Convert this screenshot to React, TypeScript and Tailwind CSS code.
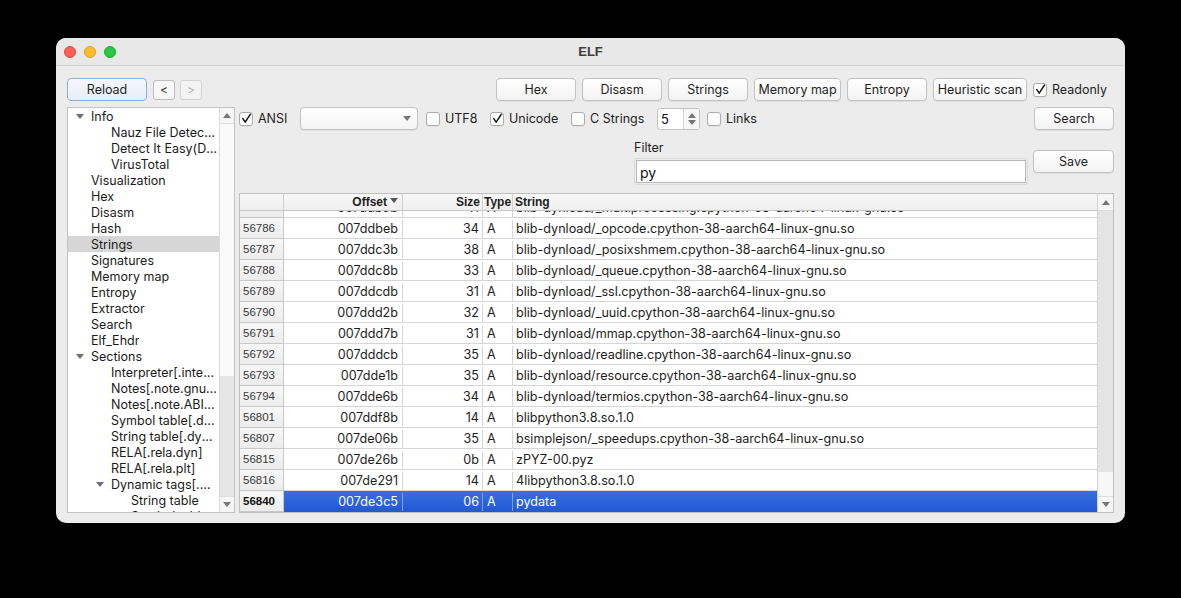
import React from "react";

const FONT = "font-['Inter','Liberation_Sans',Arial,sans-serif]";
const ARIAL = "font-['Liberation_Sans',Arial,sans-serif]";

function Btn({ label, w, h = "h-[23px]", cls = "" }: { label: string; w: string; h?: string; cls?: string }) {
  return (
    <div
      className={`${w} ${h} flex items-center justify-center pt-[2px] rounded-[4px] border border-[#c2c2c2] bg-gradient-to-b from-[#ffffff] to-[#f3f3f3] text-[12.5px] text-[#1f1f1f] shadow-[0_1px_0_rgba(0,0,0,0.06)] ${cls}`}
    >
      {label}
    </div>
  );
}

function Check({ checked }: { checked?: boolean }) {
  return (
    <div className="w-[14px] h-[14px] shrink-0 rounded-[3px] border border-[#ababab] bg-white flex items-center justify-center shadow-[0_1px_0_rgba(0,0,0,0.05)]">
      {checked && (
        <svg width="11" height="11" viewBox="0 0 11 11">
          <path d="M1.8 5.6 L4.2 9.2 L9.4 1.2" fill="none" stroke="#111" strokeWidth="1.5" strokeLinecap="round" strokeLinejoin="round" />
        </svg>
      )}
    </div>
  );
}

function CheckLabel({ label, checked, w }: { label: string; checked?: boolean; w: string }) {
  return (
    <div className={`${w} flex items-center shrink-0`}>
      <Check checked={checked} />
      <span className="ml-[5px] mt-[2px] text-[12.5px] text-[#1f1f1f] whitespace-nowrap">{label}</span>
    </div>
  );
}

function TriDown({ color = "#6b6b6b" }: { color?: string }) {
  return (
    <svg width="8" height="5" viewBox="0 0 8 5">
      <path d="M0 0 L8 0 L4 5 Z" fill={color} />
    </svg>
  );
}
function TriUp({ color = "#6b6b6b" }: { color?: string }) {
  return (
    <svg width="8" height="5" viewBox="0 0 8 5">
      <path d="M0 5 L8 5 L4 0 Z" fill={color} />
    </svg>
  );
}

type TreeItem = { t: string; d: number; arrow?: boolean; sel?: boolean };
const tree: TreeItem[] = [
  { t: "Info", d: 0, arrow: true },
  { t: "Nauz File Detector(NFD)", d: 1 },
  { t: "Detect It Easy(DiE)", d: 1 },
  { t: "VirusTotal", d: 1 },
  { t: "Visualization", d: 0 },
  { t: "Hex", d: 0 },
  { t: "Disasm", d: 0 },
  { t: "Hash", d: 0 },
  { t: "Strings", d: 0, sel: true },
  { t: "Signatures", d: 0 },
  { t: "Memory map", d: 0 },
  { t: "Entropy", d: 0 },
  { t: "Extractor", d: 0 },
  { t: "Search", d: 0 },
  { t: "Elf_Ehdr", d: 0 },
  { t: "Sections", d: 0, arrow: true },
  { t: "Interpreter[.interpreter]", d: 1 },
  { t: "Notes[.note.gnu.build-id]", d: 1 },
  { t: "Notes[.note.ABI-tag]", d: 1 },
  { t: "Symbol table[.dynsym]", d: 1 },
  { t: "String table[.dynstr]", d: 1 },
  { t: "RELA[.rela.dyn]", d: 1 },
  { t: "RELA[.rela.plt]", d: 1 },
  { t: "Dynamic tags[.dynamic]", d: 1, arrow: true },
  { t: "String table", d: 2 },
  { t: "Symbol table", d: 2 },
];

const padL: Record<number, string> = { 0: "pl-[23px]", 1: "pl-[43px]", 2: "pl-[63px]" };
const arrowL: Record<number, string> = { 0: "left-[8px]", 1: "left-[28px]", 2: "left-[48px]" };

type Row = { n: string; off: string; size: string; s: string; sel?: boolean };
const rows: Row[] = [
  { n: "56785", off: "007ddb9b", size: "41", s: "blib-dynload/_multiprocessing.cpython-38-aarch64-linux-gnu.so" },
  { n: "56786", off: "007ddbeb", size: "34", s: "blib-dynload/_opcode.cpython-38-aarch64-linux-gnu.so" },
  { n: "56787", off: "007ddc3b", size: "38", s: "blib-dynload/_posixshmem.cpython-38-aarch64-linux-gnu.so" },
  { n: "56788", off: "007ddc8b", size: "33", s: "blib-dynload/_queue.cpython-38-aarch64-linux-gnu.so" },
  { n: "56789", off: "007ddcdb", size: "31", s: "blib-dynload/_ssl.cpython-38-aarch64-linux-gnu.so" },
  { n: "56790", off: "007ddd2b", size: "32", s: "blib-dynload/_uuid.cpython-38-aarch64-linux-gnu.so" },
  { n: "56791", off: "007ddd7b", size: "31", s: "blib-dynload/mmap.cpython-38-aarch64-linux-gnu.so" },
  { n: "56792", off: "007dddcb", size: "35", s: "blib-dynload/readline.cpython-38-aarch64-linux-gnu.so" },
  { n: "56793", off: "007dde1b", size: "35", s: "blib-dynload/resource.cpython-38-aarch64-linux-gnu.so" },
  { n: "56794", off: "007dde6b", size: "34", s: "blib-dynload/termios.cpython-38-aarch64-linux-gnu.so" },
  { n: "56801", off: "007ddf8b", size: "14", s: "blibpython3.8.so.1.0" },
  { n: "56807", off: "007de06b", size: "35", s: "bsimplejson/_speedups.cpython-38-aarch64-linux-gnu.so" },
  { n: "56815", off: "007de26b", size: "0b", s: "zPYZ-00.pyz" },
  { n: "56816", off: "007de291", size: "14", s: "4libpython3.8.so.1.0" },
  { n: "56840", off: "007de3c5", size: "06", s: "pydata", sel: true },
];

function TableRow({ r, first }: { r: Row; first?: boolean }) {
  const sel = !!r.sel;
  const line = sel ? "border-[#7fa0e6]" : "border-[#d6d6d6]";
  return (
    <div className={`flex h-[21px] shrink-0 ${first ? "mt-[-14px]" : ""}`}>
      <div
        className={`w-[44px] shrink-0 flex items-center pl-[3px] pt-[1px] border-r border-b border-[#c8c8c8] bg-gradient-to-b from-[#f7f7f7] to-[#ececec] text-[11.5px] ${ARIAL} ${
          sel ? "font-bold text-[#111]" : "text-[#3a3a3a]"
        }`}
      >
        {r.n}
      </div>
      <div
        className={`flex flex-1 border-b pt-[2px] ${sel ? "bg-gradient-to-b from-[#3770e2] to-[#2458d4] text-white border-[#2458d4]" : "bg-white text-[#1d1d1d] border-[#d6d6d6]"} text-[12.6px]`}
      >
        <div className={`w-[119px] shrink-0 flex items-center justify-end pr-[4px] border-r ${line}`}>{r.off}</div>
        <div className={`w-[80px] shrink-0 flex items-center justify-end pr-[3px] border-r ${line}`}>{r.size}</div>
        <div className={`w-[30px] shrink-0 flex items-center pl-[4px] border-r ${line}`}>A</div>
        <div className="flex-1 flex items-center pl-[3px] whitespace-nowrap overflow-hidden">{r.s}</div>
      </div>
    </div>
  );
}

export default function App() {
  return (
    <div className={`w-[1181px] h-[598px] bg-black pl-[56px] pt-[38px] ${FONT}`}>
      <div className="w-[1069px] h-[485px] rounded-[10px] bg-[#ececec] overflow-hidden flex flex-col">
        {/* Title bar */}
        <div className="h-[28px] shrink-0 grid grid-cols-[1fr_auto_1fr] items-center bg-[#e8e8e8] border-b border-[#d3d3d3]">
          <div className="flex items-center gap-[8px] pl-[8px]">
            <div className="w-[12px] h-[12px] rounded-full bg-[#fe5f57] border border-[#e0443e]" />
            <div className="w-[12px] h-[12px] rounded-full bg-[#febc2e] border border-[#dea123]" />
            <div className="w-[12px] h-[12px] rounded-full bg-[#28c840] border border-[#1aab29]" />
          </div>
          <div className={`text-[13px] font-bold text-[#3d3d3d] ${ARIAL}`}>ELF</div>
          <div />
        </div>

        {/* Body */}
        <div className="flex-1 flex flex-col px-[11px] pt-[12px] pb-[10px] min-h-0">
          {/* Row 1 */}
          <div className="flex items-center h-[23px] shrink-0">
            <div className="w-[80px] h-[23px] flex items-center justify-center pt-[2px] rounded-[4px] border border-[#8eaedb] bg-gradient-to-b from-[#f4f7fc] to-[#e8eef8] text-[12.5px] text-[#1f1f1f]">
              Reload
            </div>
            <div className="ml-[6px] w-[22px] h-[20px] flex items-center justify-center rounded-[3px] border border-[#bdbdbd] bg-[#f8f8f8] text-[12px] text-[#333]">
              &lt;
            </div>
            <div className="ml-[5px] w-[22px] h-[20px] flex items-center justify-center rounded-[3px] border border-[#d3d3d3] bg-[#f3f3f3] text-[12px] text-[#b3b3b3]">
              &gt;
            </div>
            <div className="flex-1" />
            <Btn label="Hex" w="w-[80px]" />
            <Btn label="Disasm" w="w-[80px]" cls="ml-[6px]" />
            <Btn label="Strings" w="w-[80px]" cls="ml-[6px]" />
            <Btn label="Memory map" w="w-[87px]" cls="ml-[6px]" />
            <Btn label="Entropy" w="w-[80px]" cls="ml-[6px]" />
            <Btn label="Heuristic scan" w="w-[94px]" cls="ml-[6px]" />
            <div className="ml-[6px] flex items-center">
              <Check checked />
              <span className="ml-[5px] mt-[2px] w-[62px] text-[12.5px] text-[#1f1f1f]">Readonly</span>
            </div>
          </div>

          {/* Main area */}
          <div className="flex flex-1 mt-[6px] min-h-0">
            {/* Tree */}
            <div className="w-[168px] shrink-0 flex border border-[#c3c3c3] bg-white">
              <div className="flex-1 overflow-hidden min-w-0">
                {tree.map((it, i) => (
                  <div
                    key={i}
                    className={`relative h-[16px] flex items-center pt-[2px] text-[12.5px] text-[#1a1a1a] pr-[1px] ${padL[it.d]} ${
                      it.sel ? "bg-[#d6d6d6]" : ""
                    }`}
                  >
                    {it.arrow && (
                      <div className={`absolute ${arrowL[it.d]} top-[6px] flex`}>
                        <TriDown color="#707070" />
                      </div>
                    )}
                    <span className="truncate">{it.t}</span>
                  </div>
                ))}
              </div>
              <div className="w-[15px] shrink-0 flex flex-col border-l border-[#dcdcdc]">
                <div className="h-[16px] flex items-center justify-center bg-[#f6f6f6] border-b border-[#e0e0e0]">
                  <TriUp color="#777" />
                </div>
                <div className="h-[252px] bg-[#fafafa]" />
                <div className="flex-1 bg-[#e6e6e6]" />
                <div className="h-[16px] flex items-center justify-center bg-[#f6f6f6] border-t border-[#e0e0e0]">
                  <TriDown color="#777" />
                </div>
              </div>
            </div>

            {/* Right column */}
            <div className="flex-1 flex flex-col ml-[4px] min-w-0">
              {/* Row A */}
              <div className="flex items-center h-[23px] shrink-0">
                <CheckLabel label="ANSI" checked w="w-[61px]" />
                <div className="w-[118px] h-[23px] flex items-center justify-end pr-[6px] rounded-[4px] border border-[#c3c3c3] bg-gradient-to-b from-[#ffffff] to-[#f4f4f4] shadow-[0_1px_0_rgba(0,0,0,0.05)]">
                  <TriDown color="#777" />
                </div>
                <div className="ml-[8px]">
                  <CheckLabel label="UTF8" w="w-[64px]" />
                </div>
                <CheckLabel label="Unicode" checked w="w-[81px]" />
                <CheckLabel label="C Strings" w="w-[86px]" />
                <div className="w-[43px] h-[22px] flex rounded-[3px] border border-[#c3c3c3] bg-white">
                  <div className="flex-1 flex items-center pl-[3px] pt-[2px] text-[13px] text-[#111]">5</div>
                  <div className="w-[16px] flex flex-col items-center justify-center gap-[2px] border-l border-[#d0d0d0] bg-[#f7f7f7]">
                    <TriUp color="#777" />
                    <TriDown color="#777" />
                  </div>
                </div>
                <div className="ml-[7px]">
                  <CheckLabel label="Links" w="w-[60px]" />
                </div>
                <div className="flex-1" />
                <Btn label="Search" w="w-[80px]" />
              </div>

              {/* Row B */}
              <div className="flex h-[63px] shrink-0">
                <div className="ml-[395px] flex flex-col">
                  <div className="mt-[10px] h-[16px] flex items-center text-[12.5px] text-[#1f1f1f]">Filter</div>
                  <div className="mt-[2px] w-[394px] h-[27px] rounded-[3px] border border-[#dadada] p-[1px] bg-[#ececec]">
                    <div className="w-full h-full border border-[#b9b9b9] bg-white flex items-center pl-[3px] pt-[1px] text-[14px] text-[#111]">
                      py
                    </div>
                  </div>
                </div>
                <div className="flex-1" />
                <div className="mt-[20px]">
                  <Btn label="Save" w="w-[81px]" />
                </div>
              </div>

              {/* Table */}
              <div className="flex-1 flex border border-[#c0c0c0] bg-white min-h-0">
                <div className="flex-1 flex flex-col min-w-0 overflow-hidden">
                  {/* header */}
                  <div className={`h-[17px] shrink-0 flex border-b border-[#c6c6c6] bg-gradient-to-b from-[#f8f8f8] to-[#efefef] text-[12px] font-bold text-[#222] ${ARIAL}`}>
                    <div className="w-[44px] shrink-0 border-r border-[#d0d0d0]" />
                    <div className="w-[119px] shrink-0 flex items-center justify-end pr-[4px] border-r border-[#d0d0d0]">
                      <span>Offset</span>
                      <span className="ml-[3px] mb-[4px] flex">
                        <TriDown color="#555" />
                      </span>
                    </div>
                    <div className="w-[80px] shrink-0 flex items-center justify-end pr-[2px] border-r border-[#d0d0d0]">Size</div>
                    <div className="w-[30px] shrink-0 flex items-center pl-[1px] border-r border-[#d0d0d0]">Type</div>
                    <div className="flex-1 flex items-center pl-[2px]">String</div>
                  </div>
                  <div className="flex-1 flex flex-col overflow-hidden">
                    {rows.map((r, i) => (
                      <TableRow key={r.n} r={r} first={i === 0} />
                    ))}
                  </div>
                </div>
                <div className="w-[16px] shrink-0 flex flex-col border-l border-[#d2d2d2]">
                  <div className="h-[17px] flex items-center justify-center bg-[#f6f6f6] border-b border-[#dedede]">
                    <TriUp color="#777" />
                  </div>
                  <div className="h-[261px] bg-[#e4e4e4]" />
                  <div className="flex-1 bg-[#f7f7f7]" />
                  <div className="h-[16px] flex items-center justify-center bg-[#f6f6f6] border-t border-[#dedede]">
                    <TriDown color="#777" />
                  </div>
                </div>
              </div>
            </div>
          </div>
        </div>
      </div>
    </div>
  );
}
